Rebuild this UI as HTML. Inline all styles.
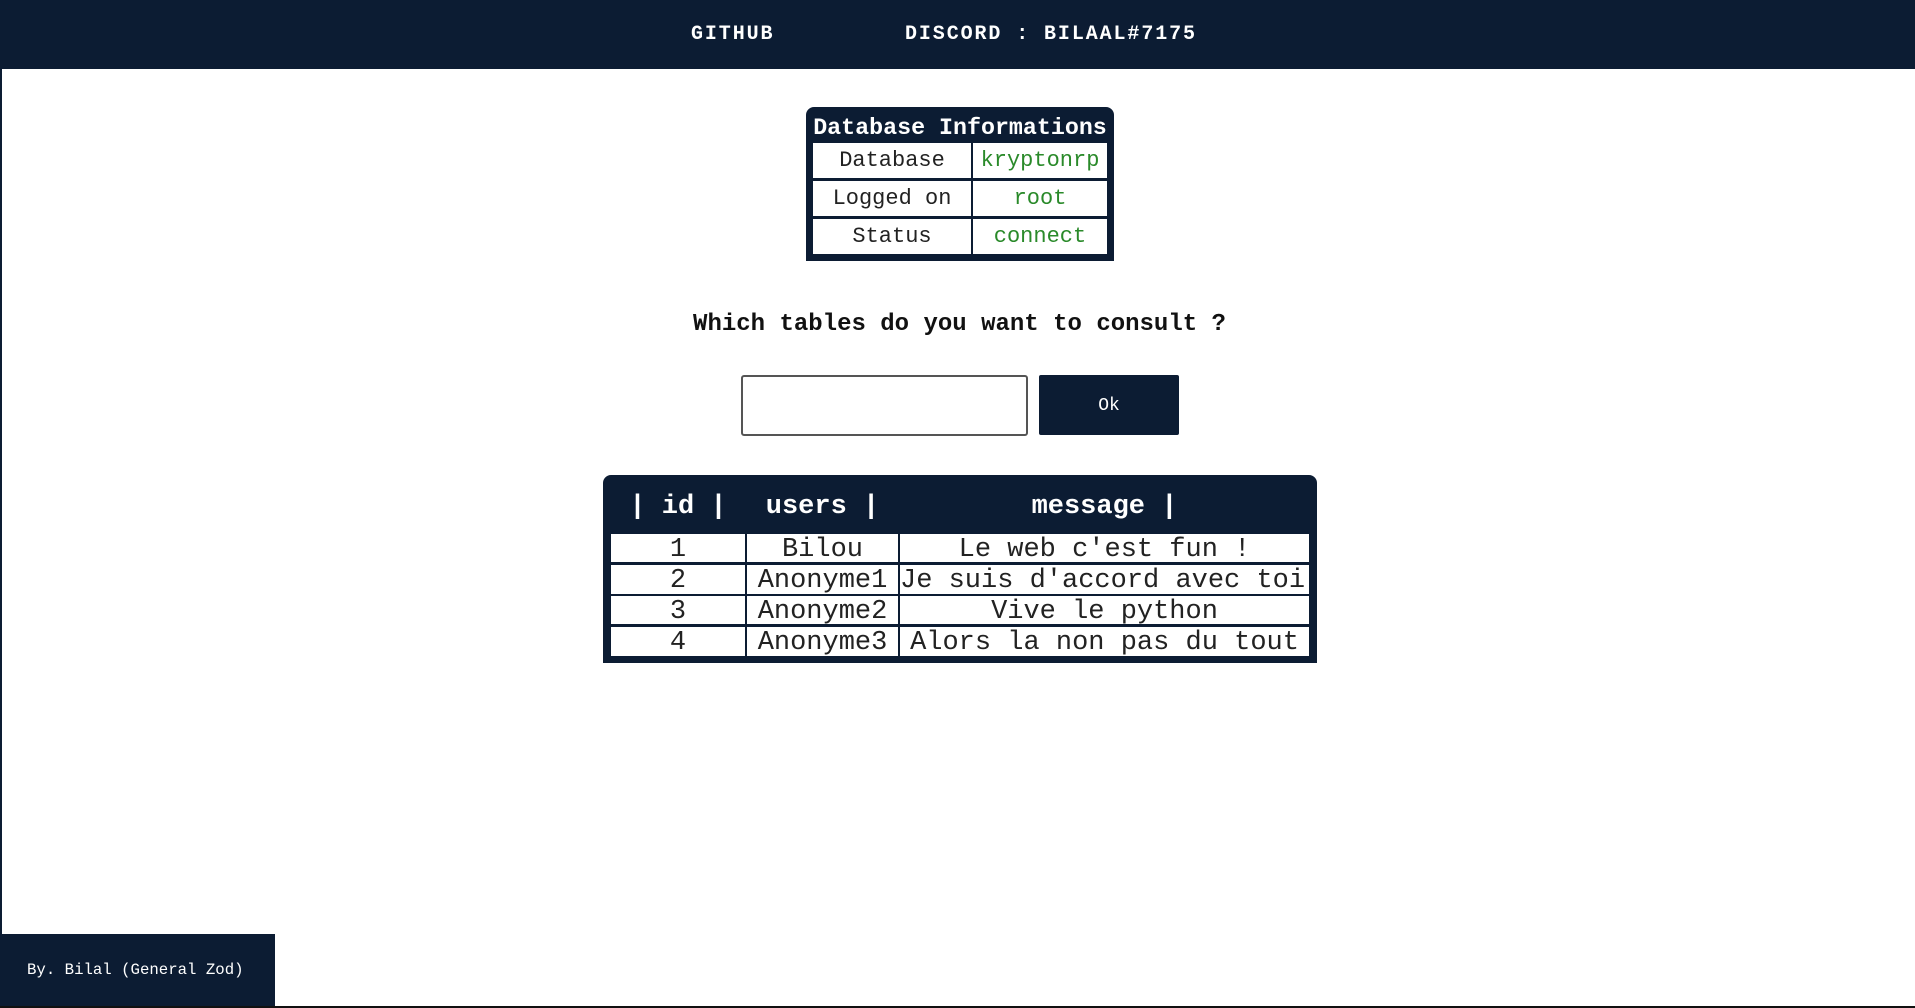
<!DOCTYPE html>
<html><head><meta charset="utf-8"><style>
*{margin:0;padding:0;box-sizing:border-box}
body{width:1915px;height:1008px;background:#fff;position:relative;overflow:hidden;font-family:"Liberation Mono","Courier New",monospace;color:#222}
.nav{position:absolute;left:0;top:0;width:1915px;height:69px;background:#0c1c33}
.lb{position:absolute;left:0;top:0;width:2px;height:1008px;background:#0c1c33}
.a{position:absolute;white-space:nowrap}
.nt{color:#fff;font-weight:bold;font-size:20px;top:23px;letter-spacing:1.9px}
.box{position:absolute;background:#0c1c33}
.c{position:absolute;background:#fff;text-align:center;white-space:nowrap}
.g{color:#2a8a2a}
.t{font-size:27px;padding-top:2px}
</style></head><body>
<div class="nav"></div>
<div class="lb"></div>
<div class="a nt" style="left:691px">GITHUB</div>
<div class="a nt" style="left:905px">DISCORD : BILAAL#7175</div>

<div class="box" style="left:806px;top:107px;width:308px;height:154px;border-radius:8px 8px 0 0"></div>
<div class="a" style="left:806px;width:308px;top:115px;text-align:center;color:#fff;font-weight:bold;font-size:23.3px">Database Informations</div>
<div class="c" style="left:813px;top:143px;width:158px;height:35px;line-height:35px;font-size:22px">Database</div>
<div class="c g" style="left:973px;top:143px;width:134px;height:35px;line-height:35px;font-size:22px">kryptonrp</div>
<div class="c" style="left:813px;top:181px;width:158px;height:35px;line-height:35px;font-size:22px">Logged on</div>
<div class="c g" style="left:973px;top:181px;width:134px;height:35px;line-height:35px;font-size:22px">root</div>
<div class="c" style="left:813px;top:219px;width:158px;height:35px;line-height:35px;font-size:22px">Status</div>
<div class="c g" style="left:973px;top:219px;width:134px;height:35px;line-height:35px;font-size:22px">connect</div>

<div class="a" style="left:0;width:1915px;top:311px;text-align:center;font-weight:bold;font-size:24px;color:#111;padding-left:4px">Which tables do you want to consult ?</div>

<div class="a" style="left:741px;top:375px;width:287px;height:61px;border:2px solid #555;border-radius:3px"></div>
<div class="box" style="left:1039px;top:375px;width:140px;height:60px;border-radius:2px;color:#fff;font-size:18px;text-align:center;line-height:62px">Ok</div>

<div class="box" style="left:603px;top:475px;width:714px;height:188px;border-radius:8px 8px 0 0"></div>
<div class="a" style="left:611px;width:134px;top:492px;text-align:center;color:#fff;font-weight:bold;font-size:27px">| id |</div>
<div class="a" style="left:747px;width:151px;top:492px;text-align:center;color:#fff;font-weight:bold;font-size:27px">users |</div>
<div class="a" style="left:900px;width:409px;top:492px;text-align:center;color:#fff;font-weight:bold;font-size:27px">message |</div>

<div class="c t" style="left:611px;top:534px;width:134px;height:28px;line-height:28px">1</div>
<div class="c t" style="left:747px;top:534px;width:151px;height:28px;line-height:28px">Bilou</div>
<div class="c t" style="left:900px;top:534px;width:409px;height:28px;line-height:28px">Le web c'est fun !</div>
<div class="c t" style="left:611px;top:565px;width:134px;height:29px;line-height:29px">2</div>
<div class="c t" style="left:747px;top:565px;width:151px;height:29px;line-height:29px">Anonyme1</div>
<div class="c t" style="left:900px;top:565px;width:409px;height:29px;line-height:29px;text-align:left;overflow:hidden">Je suis d'accord avec toi</div>
<div class="c t" style="left:611px;top:596px;width:134px;height:28px;line-height:28px">3</div>
<div class="c t" style="left:747px;top:596px;width:151px;height:28px;line-height:28px">Anonyme2</div>
<div class="c t" style="left:900px;top:596px;width:409px;height:28px;line-height:28px">Vive le python</div>
<div class="c t" style="left:611px;top:627px;width:134px;height:29px;line-height:29px">4</div>
<div class="c t" style="left:747px;top:627px;width:151px;height:29px;line-height:29px">Anonyme3</div>
<div class="c t" style="left:900px;top:627px;width:409px;height:29px;line-height:29px">Alors la non pas du tout</div>

<div class="box" style="left:2px;top:934px;width:273px;height:72px"></div>
<div class="a" style="left:27px;top:961px;color:#fff;font-size:15.7px">By. Bilal (General Zod)</div>
<div class="box" style="left:0;top:1006px;width:1915px;height:2px;background:#111"></div>
</body></html>
